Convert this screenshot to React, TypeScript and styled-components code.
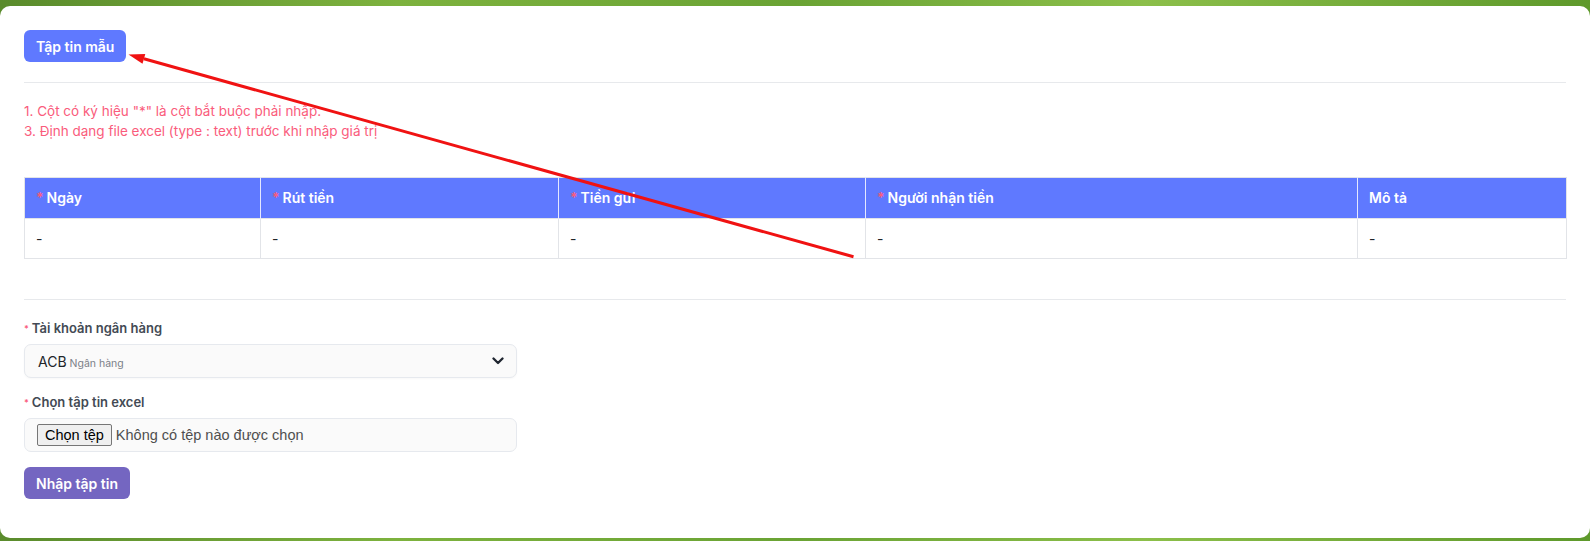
import styled, { createGlobalStyle } from "styled-components";

const GlobalStyle = createGlobalStyle`
  body {
    margin: 0;
    font-family: Inter, "Noto Sans", sans-serif;
    background: linear-gradient(90deg, #5a8b2c 0%, #7db23e 25%, #6aa334 50%, #8cbf4a 72%, #5e992b 100%);
  }
  * {
    box-sizing: border-box;
  }
`;

const Page = styled.div`
  position: relative;
  width: 1590px;
  height: 541px;
  padding: 6px 0 3px;
  overflow: hidden;
`;

const Card = styled.div`
  height: 532px;
  background: #fff;
  border-radius: 10px;
  padding: 24px 24px 0;
  display: flex;
  flex-direction: column;
  align-items: flex-start;
`;

const Button = styled.button<{ $color: string }>`
  height: 32px;
  padding: 0 12px;
  border: none;
  border-radius: 6px;
  background: ${(p) => p.$color};
  color: #fff;
  font-family: Inter, sans-serif;
  font-size: 14px;
  font-weight: 600;
  cursor: pointer;
`;

const Divider = styled.hr<{ $top: number; $bottom: number }>`
  align-self: stretch;
  margin: ${(p) => p.$top}px 0 ${(p) => p.$bottom}px;
  border: none;
  border-top: 1px solid #e7e9ec;
`;

const Notes = styled.div`
  color: #fa5c7c;
  font-size: 13.5px;
  line-height: 19.5px;
  margin-bottom: 36px;

  p {
    margin: 0;
  }
`;

const Table = styled.table`
  width: 1542px;
  table-layout: fixed;
  border-collapse: collapse;
  border: 1px solid #e2e4e8;
  font-size: 14px;

  th {
    background: #5f79ff;
    color: #fff;
    font-weight: 600;
    text-align: left;
    padding: 10px 11px;
    line-height: 20px;
    border-left: 1px solid #e4e8ff;
  }

  th:first-child {
    border-left: none;
  }

  td {
    padding: 10px 11px;
    line-height: 19px;
    color: #212529;
    border: 1px solid #e2e4e8;
  }
`;

const Req = styled.span<{ $small?: boolean }>`
  color: #fa5c7c;
  font-size: ${(p) => (p.$small ? "9px" : "14px")};
  margin-right: 3px;
  vertical-align: ${(p) => (p.$small ? "1px" : "baseline")};
`;

const FormGroup = styled.div<{ $bottom: number }>`
  display: flex;
  flex-direction: column;
  width: 493px;
  margin-bottom: ${(p) => p.$bottom}px;
`;

const Label = styled.label`
  font-size: 13px;
  font-weight: 600;
  color: #434a54;
  line-height: 20px;
  margin-bottom: 5px;
`;

const SelectBox = styled.div`
  height: 34px;
  display: flex;
  align-items: center;
  justify-content: space-between;
  padding: 0 12px 0 13px;
  background: #fafafa;
  border: 1px solid #e6e9ee;
  border-radius: 7px;
  box-shadow: 0 1px 2px rgba(0, 0, 0, 0.03);
`;

const SelectValue = styled.span`
  font-size: 14px;
  color: #212529;

  small {
    font-size: 10.5px;
    color: #7b8088;
    margin-left: 3px;
  }
`;

const FileBox = styled.div`
  height: 34px;
  display: flex;
  align-items: center;
  gap: 4px;
  padding: 0 12px;
  background: #fafafa;
  border: 1px solid #e6e9ee;
  border-radius: 7px;
  font-family: "Liberation Sans", Arial, sans-serif;
  font-size: 14.5px;
`;

const FileButton = styled.span`
  height: 22px;
  display: flex;
  align-items: center;
  padding: 0 7px;
  background: #efefef;
  border: 1px solid #767676;
  border-radius: 2px;
  color: #000;
`;

const FileText = styled.span`
  color: #4f4f4f;
`;

const Overlay = styled.svg`
  position: absolute;
  top: 0;
  left: 0;
  pointer-events: none;
`;

const columns = [
  { title: "Ngày", req: true, width: 236 },
  { title: "Rút tiền", req: true, width: 298 },
  { title: "Tiền gửi", req: true, width: 307 },
  { title: "Người nhận tiền", req: true, width: 492 },
  { title: "Mô tả", req: false, width: 209 },
];

const Chevron = () => (
  <svg width="12" height="8" viewBox="0 0 12 8">
    <path d="M1.5 1.5 6 6l4.5-4.5" fill="none" stroke="#1f2530" strokeWidth="2.3" strokeLinecap="round" strokeLinejoin="round" />
  </svg>
);

export default function App() {
  return (
    <Page>
      <GlobalStyle />
      <Card>
        <Button $color="#5f79ff">Tập tin mẫu</Button>
        <Divider $top={20} $bottom={19} />
        <Notes>
          <p>1. Cột có ký hiệu "*" là cột bắt buộc phải nhập.</p>
          <p>3. Định dạng file excel (type : text) trước khi nhập giá trị</p>
        </Notes>
        <Table>
          <colgroup>
            {columns.map((c) => (
              <col key={c.title} style={{ width: c.width }} />
            ))}
          </colgroup>
          <thead>
            <tr>
              {columns.map((c) => (
                <th key={c.title}>
                  {c.req && <Req>*</Req>}
                  {c.title}
                </th>
              ))}
            </tr>
          </thead>
          <tbody>
            <tr>
              {columns.map((c) => (
                <td key={c.title}>-</td>
              ))}
            </tr>
          </tbody>
        </Table>
        <Divider $top={40} $bottom={18} />
        <FormGroup $bottom={14}>
          <Label>
            <Req $small>*</Req>Tài khoản ngân hàng
          </Label>
          <SelectBox>
            <SelectValue>
              ACB<small>Ngân hàng</small>
            </SelectValue>
            <Chevron />
          </SelectBox>
        </FormGroup>
        <FormGroup $bottom={15}>
          <Label>
            <Req $small>*</Req>Chọn tập tin excel
          </Label>
          <FileBox>
            <FileButton>Chọn tệp</FileButton>
            <FileText>Không có tệp nào được chọn</FileText>
          </FileBox>
        </FormGroup>
        <Button $color="#7466c1">Nhập tập tin</Button>
      </Card>
      <Overlay width="1590" height="541" viewBox="0 0 1590 541">
        <line x1="853.5" y1="256.8" x2="143.9" y2="58.8" stroke="#f01212" strokeWidth="3" />
        <polygon points="128.5,54.5 145.3,53.9 142.5,63.7" fill="#f01212" />
      </Overlay>
    </Page>
  );
}
